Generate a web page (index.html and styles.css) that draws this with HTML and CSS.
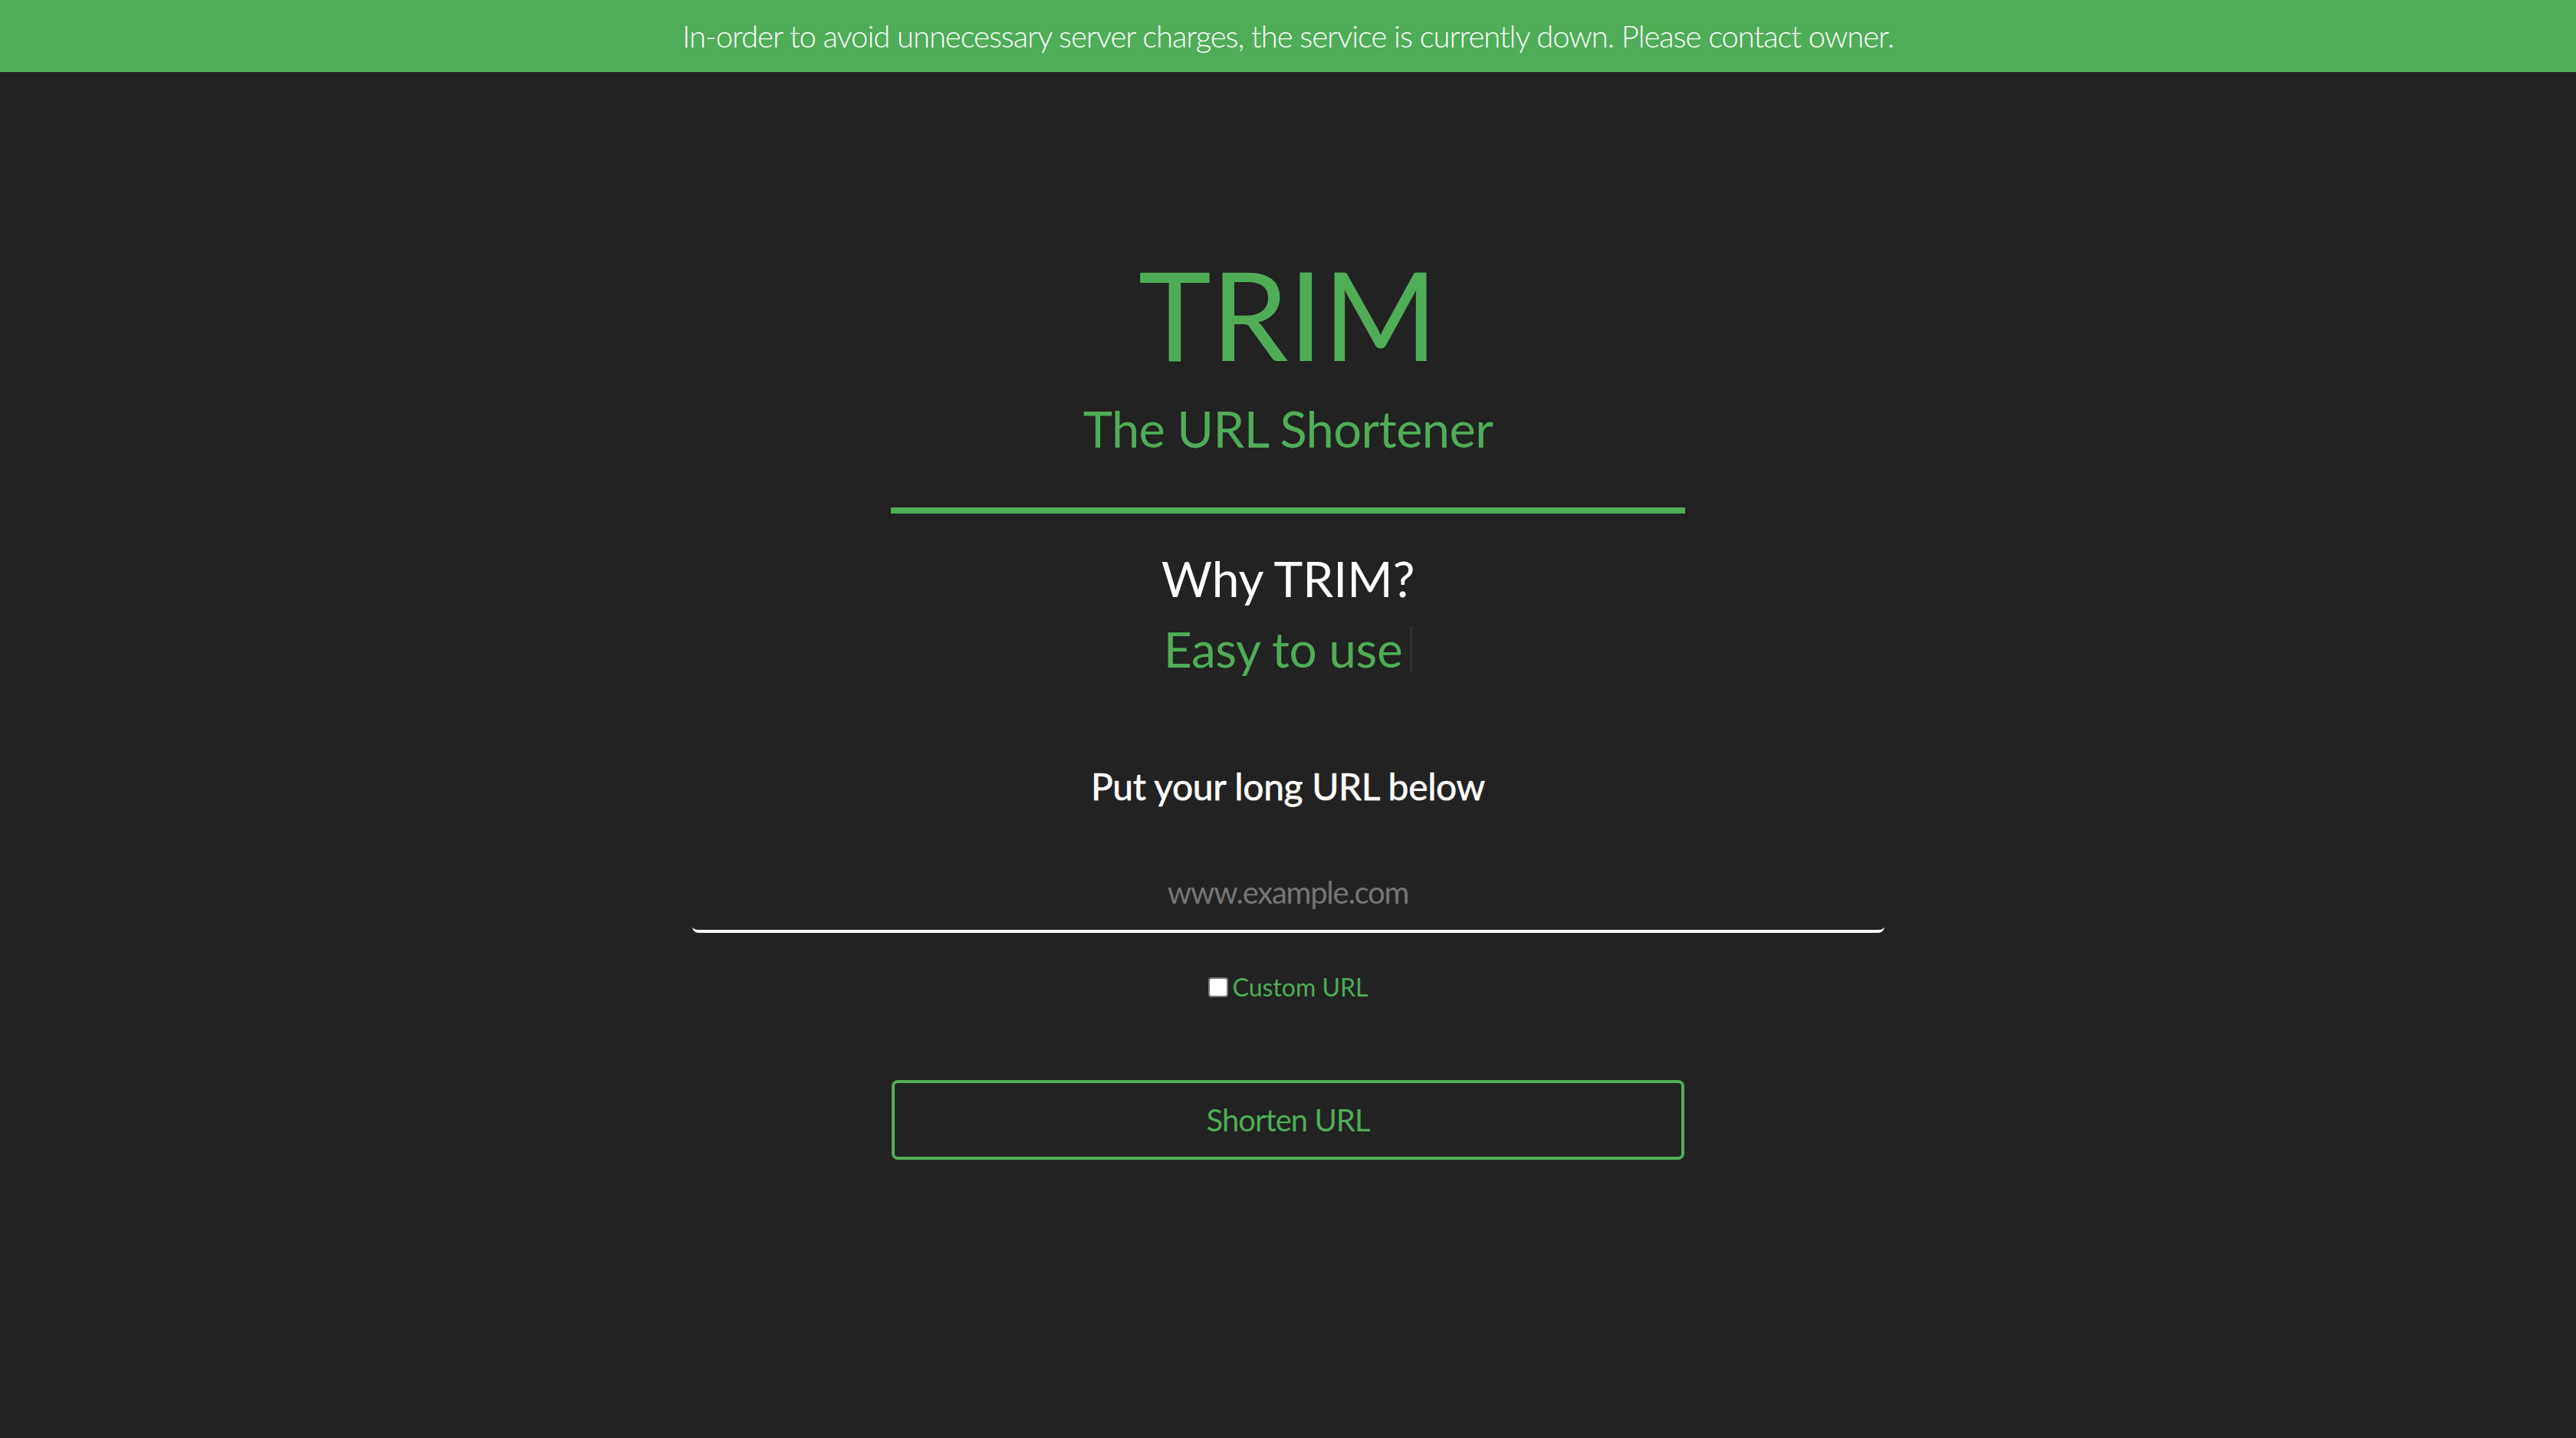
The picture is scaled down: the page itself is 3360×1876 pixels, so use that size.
FILE: index.html
```html
<!DOCTYPE html>
<html lang="en">
<head>
<meta charset="utf-8">
<title>TRIM - The URL Shortener</title>
<link rel="stylesheet" href="styles.css">
</head>
<body>
<div class="banner">In-order to avoid unnecessary server charges, the service is currently down. Please contact owner.</div>
<main class="main">
  <h1 class="title">TRIM</h1>
  <h2 class="subtitle">The URL Shortener</h2>
  <hr class="rule">
  <h3 class="why">Why TRIM?</h3>
  <div class="typed">Easy to use<span class="cursor"></span></div>
  <h4 class="prompt">Put your long URL below</h4>
  <input class="url-input" type="text" placeholder="www.example.com">
  <label class="custom"><input class="check" type="checkbox"><span>Custom URL</span></label>
  <button class="shorten" type="button">Shorten URL</button>
</main>
</body>
</html>
```
FILE: styles.css
```css
html, body {
  margin: 0;
  padding: 0;
}
body {
  background: #222222;
  font-family: Lato, "Liberation Sans", sans-serif;
  min-height: 1876px;
}
.banner {
  background: #4fad57;
  color: #ffffff;
  font-weight: 300;
  font-size: 40px;
  line-height: 48px;
  letter-spacing: -1.05px;
  padding: 23px 0;
  text-align: center;
}
.main {
  display: flex;
  flex-direction: column;
  align-items: center;
}
.title {
  margin: 218px 0 0;
  font-size: 161px;
  font-weight: 400;
  line-height: 1.2;
  color: #4fad57;
}
.subtitle {
  margin: 15px 0 0;
  font-size: 65px;
  font-weight: 400;
  line-height: 1.2;
  letter-spacing: -0.6px;
  color: #4fad57;
}
.rule {
  margin: 64px 0 0;
  width: 1036px;
  height: 8px;
  border: 0;
  background: #4fad57;
}
.why {
  margin: 47px 0 0;
  font-size: 64px;
  font-weight: 400;
  line-height: 1.2;
  color: #ffffff;
}
.typed {
  margin: 15px 0 0;
  font-size: 64px;
  line-height: 1.2;
  letter-spacing: -0.4px;
  color: #4fad57;
  display: flex;
  align-items: center;
}
.cursor {
  display: inline-block;
  width: 3px;
  height: 60px;
  margin-left: 10px;
  background: #2a332a;
}
.prompt {
  margin: 111px 0 0;
  font-size: 48px;
  font-weight: 400;
  line-height: 1.2;
  letter-spacing: -0.35px;
  color: #ffffff;
  -webkit-text-stroke: 0.6px #ffffff;
}
.url-input {
  margin: 60px 0 0;
  width: 1555px;
  box-sizing: border-box;
  padding: 25px 20px;
  font-family: Lato, "Liberation Sans", sans-serif;
  font-size: 40px;
  line-height: 48px;
  letter-spacing: -1.25px;
  height: 103px;
  text-align: center;
  color: #ffffff;
  background: transparent;
  border: 0;
  border-bottom: 4px solid #ffffff;
  border-radius: 8px;
  outline: none;
}
.url-input::placeholder {
  color: #757575;
}
.custom {
  margin: 52px 0 0;
  display: flex;
  align-items: center;
  font-size: 32px;
  line-height: 38px;
  color: #4fad57;
}
.check {
  appearance: none;
  -webkit-appearance: none;
  width: 26px;
  height: 26px;
  margin: 0 6px 0 0;
  box-sizing: border-box;
  border: 2px solid #767676;
  border-radius: 4px;
  background: #ffffff;
}
.shorten {
  margin: 102px 0 0;
  width: 1034px;
  height: 104px;
  box-sizing: border-box;
  background: transparent;
  border: 4px solid #4fad57;
  border-radius: 8px;
  color: #4fad57;
  font-family: Lato, "Liberation Sans", sans-serif;
  font-size: 40px;
  line-height: 48px;
  letter-spacing: -1px;
  padding: 0;
}
```
